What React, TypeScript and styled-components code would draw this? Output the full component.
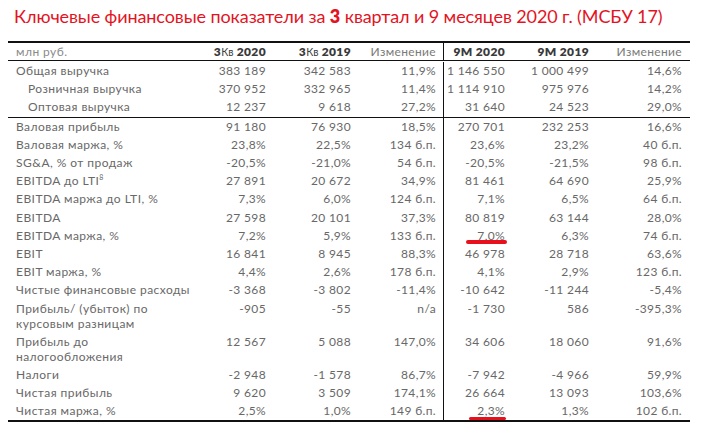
import React from "react";
import styled, { createGlobalStyle, css } from "styled-components";

const Global = createGlobalStyle`
  html, body { margin: 0; padding: 0; background: #fff; }
  body { font-family: "Lato", "DejaVu Sans", sans-serif; }
`;

const Page = styled.div`
  width: 710px;
  height: 439px;
  padding: 5px 0 0 0;
  box-sizing: border-box;
`;

const Title = styled.h1`
  margin: 0 0 0 14px;
  font-family: "Lato", sans-serif;
  font-weight: 400;
  font-size: 18px;
  line-height: 22px;
  letter-spacing: -0.1px;
  color: #e3141f;
  white-space: nowrap;
  b { font-weight: 800; }
`;

const Table = styled.div`
  margin: 14px 0 0 8px;
  width: 682px;
  border-top: 2px solid #111;
  border-bottom: 2px solid #111;
`;

const cols = "182px 80px 85px 88px 66px 84px 97px";

const HeaderRow = styled.div`
  display: grid;
  grid-template-columns: ${cols};
  border-bottom: 1px solid #111;
  height: 17px;
  align-items: center;
`;

const Group = styled.div<{ $padTop?: number; $last?: boolean }>`
  padding-top: ${(p) => p.$padTop ?? 0}px;
  ${(p) => !p.$last && css`border-bottom: 1px solid #111;`}
`;

const Row = styled.div`
  display: grid;
  grid-template-columns: ${cols};
`;

const Cell = styled.div<{ $divider?: boolean; $pr?: number }>`
  position: relative;
  text-align: right;
  padding: 1.1px ${(p) => p.$pr ?? 4}px 1.1px 0;
  font-size: 12px;
  line-height: 16px;
  letter-spacing: 0.35px;
  color: #686868;
  white-space: nowrap;
  ${(p) => p.$divider && css`border-left: 1px solid #111;`}
`;

const HeadCell = styled(Cell)<{ $bold?: boolean }>`
  padding-top: 0;
  padding-bottom: 0;
  align-self: stretch;
  display: flex;
  align-items: center;
  justify-content: flex-end;
  color: ${(p) => (p.$bold ? "#3a3a3a" : "#7a7a7a")};
  font-weight: ${(p) => (p.$bold ? 800 : 400)};
  small { font-size: 10.5px; font-weight: 400; letter-spacing: 0.2px; margin-right: 3px; }
`;

const LabelCell = styled.div<{ $indent?: boolean; $multi?: boolean }>`
  padding: 1.1px 0 1.1px ${(p) => (p.$indent ? 20 : 8)}px;
  font-size: 12px;
  line-height: ${(p) => (p.$multi ? "15.5px" : "16px")};
  letter-spacing: 0.45px;
  color: #686868;
  white-space: nowrap;
  sup { font-size: 7px; line-height: 0; vertical-align: 5px; }
`;

const HeadLabel = styled(LabelCell)`
  color: #8a8a8a;
  align-self: center;
  padding-top: 0;
  padding-bottom: 0;
`;

const Marked = styled.span<{ $w: number; $right: number; $bottom: number }>`
  &::after {
    content: "";
    position: absolute;
    right: ${(p) => p.$right}px;
    bottom: ${(p) => p.$bottom}px;
    width: ${(p) => p.$w}px;
    height: 3.5px;
    border-radius: 2px;
    background: #e8101c;
  }
`;

type Mark = { w: number; right: number; bottom: number };
type RowData = {
  label: React.ReactNode;
  indent?: boolean;
  multi?: boolean;
  v: string[];
  mark?: Mark;
};

const group1: RowData[] = [
  { label: "Общая выручка", v: ["383 189", "342 583", "11,9%", "1 146 550", "1 000 499", "14,6%"] },
  { label: "Розничная выручка", indent: true, v: ["370 952", "332 965", "11,4%", "1 114 910", "975 976", "14,2%"] },
  { label: "Оптовая выручка", indent: true, v: ["12 237", "9 618", "27,2%", "31 640", "24 523", "29,0%"] },
];

const group2: RowData[] = [
  { label: "Валовая прибыль", v: ["91 180", "76 930", "18,5%", "270 701", "232 253", "16,6%"] },
  { label: "Валовая маржа, %", v: ["23,8%", "22,5%", "134 б.п.", "23,6%", "23,2%", "40 б.п."] },
  { label: "SG&A, % от продаж", v: ["-20,5%", "-21,0%", "54 б.п.", "-20,5%", "-21,5%", "98 б.п."] },
  { label: <>EBITDA до LTI<sup>8</sup></>, v: ["27 891", "20 672", "34,9%", "81 461", "64 690", "25,9%"] },
  { label: "EBITDA маржа до LTI, %", v: ["7,3%", "6,0%", "124 б.п.", "7,1%", "6,5%", "64 б.п."] },
  { label: "EBITDA", v: ["27 598", "20 101", "37,3%", "80 819", "63 144", "28,0%"] },
  { label: "EBITDA маржа, %", v: ["7,2%", "5,9%", "133 б.п.", "7,0%", "6,3%", "74 б.п."], mark: { w: 41, right: 2, bottom: 1 } },
  { label: "EBIT", v: ["16 841", "8 945", "88,3%", "46 978", "28 718", "63,6%"] },
  { label: "EBIT маржа, %", v: ["4,4%", "2,6%", "178 б.п.", "4,1%", "2,9%", "123 б.п."] },
  { label: "Чистые финансовые расходы", v: ["-3 368", "-3 802", "-11,4%", "-10 642", "-11 244", "-5,4%"] },
  { label: <>Прибыль/ (убыток) по<br />курсовым разницам</>, multi: true, v: ["-905", "-55", "n/a", "-1 730", "586", "-395,3%"] },
  { label: <>Прибыль до<br />налогообложения</>, multi: true, v: ["12 567", "5 088", "147,0%", "34 606", "18 060", "91,6%"] },
  { label: "Налоги", v: ["-2 948", "-1 578", "86,7%", "-7 942", "-4 966", "59,9%"] },
  { label: "Чистая прибыль", v: ["9 620", "3 509", "174,1%", "26 664", "13 093", "103,6%"] },
  { label: "Чистая маржа, %", v: ["2,5%", "1,0%", "149 б.п.", "2,3%", "1,3%", "102 б.п."], mark: { w: 37, right: 3, bottom: 0 } },
];

const pads = [4, 4, 7, 4, 4, 8];

const DataRow = ({ r }: { r: RowData }) => (
  <Row>
    <LabelCell $indent={r.indent} $multi={r.multi}>{r.label}</LabelCell>
    {r.v.map((val, i) => (
      <Cell key={i} $divider={i === 3} $pr={pads[i]}>
        {i === 3 && r.mark ? (
          <Marked $w={r.mark.w} $right={r.mark.right} $bottom={r.mark.bottom}>{val}</Marked>
        ) : (
          val
        )}
      </Cell>
    ))}
  </Row>
);

export default function App() {
  return (
    <Page>
      <Global />
      <Title>
        Ключевые финансовые показатели за <b>3</b> квартал и 9 месяцев 2020 г. (МСБУ 17)
      </Title>
      <Table>
        <HeaderRow>
          <HeadLabel>млн руб.</HeadLabel>
          <HeadCell $bold $pr={4}>3<small>Кв</small>2020</HeadCell>
          <HeadCell $bold $pr={4}>3<small>Кв</small>2019</HeadCell>
          <HeadCell $pr={7}>Изменение</HeadCell>
          <HeadCell $bold $divider $pr={4}>9M 2020</HeadCell>
          <HeadCell $bold $pr={4}>9M 2019</HeadCell>
          <HeadCell $pr={8}>Изменение</HeadCell>
        </HeaderRow>
        <Group $padTop={1}>
          {group1.map((r, i) => <DataRow key={i} r={r} />)}
        </Group>
        <Group $last>
          {group2.map((r, i) => <DataRow key={i} r={r} />)}
        </Group>
      </Table>
    </Page>
  );
}
